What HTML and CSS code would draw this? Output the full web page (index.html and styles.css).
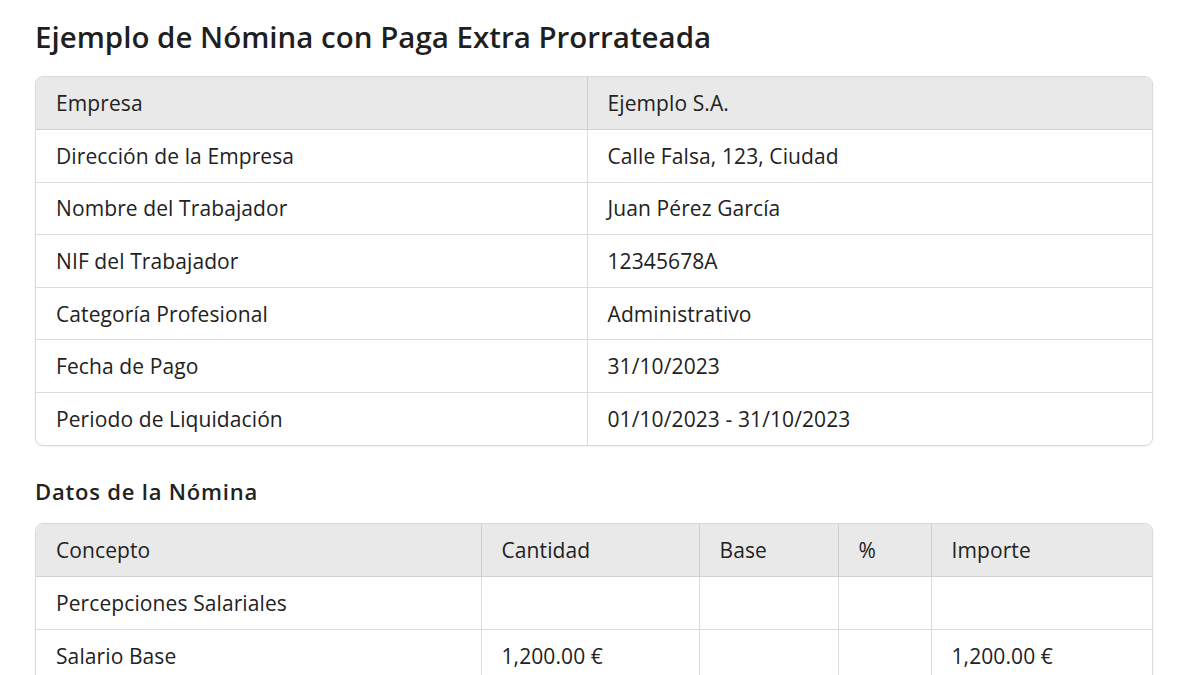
FILE: index.html
```html
<!DOCTYPE html>
<html lang="es">
<head>
<meta charset="utf-8">
<title>Nómina</title>
<link rel="stylesheet" href="styles.css">
</head>
<body>
<main class="page">
  <h1 class="title">Ejemplo de Nómina con Paga Extra Prorrateada</h1>
  <div class="table-wrap">
    <table class="tbl info">
      <colgroup><col class="c-label"><col></colgroup>
      <thead>
        <tr><th>Empresa</th><th>Ejemplo S.A.</th></tr>
      </thead>
      <tbody>
        <tr><td>Dirección de la Empresa</td><td>Calle Falsa, 123, Ciudad</td></tr>
        <tr><td>Nombre del Trabajador</td><td>Juan Pérez García</td></tr>
        <tr><td>NIF del Trabajador</td><td>12345678A</td></tr>
        <tr><td>Categoría Profesional</td><td>Administrativo</td></tr>
        <tr><td>Fecha de Pago</td><td>31/10/2023</td></tr>
        <tr><td>Periodo de Liquidación</td><td>01/10/2023 - 31/10/2023</td></tr>
      </tbody>
    </table>
  </div>

  <h2 class="subtitle">Datos de la Nómina</h2>
  <div class="table-wrap">
    <table class="tbl data">
      <colgroup>
        <col class="c-concepto"><col class="c-cantidad"><col class="c-base"><col class="c-pct"><col>
      </colgroup>
      <thead>
        <tr><th>Concepto</th><th>Cantidad</th><th>Base</th><th>%</th><th>Importe</th></tr>
      </thead>
      <tbody>
        <tr><td>Percepciones Salariales</td><td></td><td></td><td></td><td></td></tr>
        <tr><td>Salario Base</td><td>1,200.00 €</td><td></td><td></td><td>1,200.00 €</td></tr>
      </tbody>
    </table>
  </div>
</main>
</body>
</html>
```

FILE: styles.css
```css
* { box-sizing: border-box; }
html, body { margin: 0; padding: 0; background: #fff; }
body {
  font-family: "Open Sans", "Noto Sans", sans-serif;
  color: #222;
  overflow: hidden;
  height: 675px;
}
.page {
  padding: 17px 47px 0 35px;
}
.title {
  margin: 0 0 19px 0;
  font-size: 29.5px;
  font-weight: 600;
  line-height: 40px;
  color: #1f1f1f;
  letter-spacing: 0;
}
.subtitle {
  margin: 30px 0 17px 0;
  font-size: 22px;
  font-weight: 600;
  line-height: 30px;
  color: #222;
  letter-spacing: 0.8px;
}
.table-wrap {
  border: 1px solid #d9d9d9;
  border-radius: 8px;
  overflow: hidden;
  box-shadow: 0 1px 2px rgba(0,0,0,0.06);
}
.tbl {
  width: 100%;
  border-collapse: collapse;
  table-layout: fixed;
  font-size: 21px;
  letter-spacing: 0.1px;
}
.tbl th, .tbl td {
  height: 52.6px;
  padding: 0 20px;
  text-align: left;
  font-weight: 400;
  border-right: 1px solid #dcdcdc;
  border-bottom: 1px solid #dcdcdc;
  white-space: nowrap;
  color: #222;
}
.tbl th:last-child, .tbl td:last-child { border-right: none; }
.tbl tbody tr:last-child td { border-bottom: none; }
.tbl thead th {
  background: #e9e9e9;
  border-bottom-color: #d2d2d2;
  border-right-color: #cfcfcf;
}
.c-label { width: 551px; }
.c-concepto { width: 445px; }
.c-cantidad { width: 218px; }
.c-base { width: 139px; }
.c-pct { width: 93px; }
```
